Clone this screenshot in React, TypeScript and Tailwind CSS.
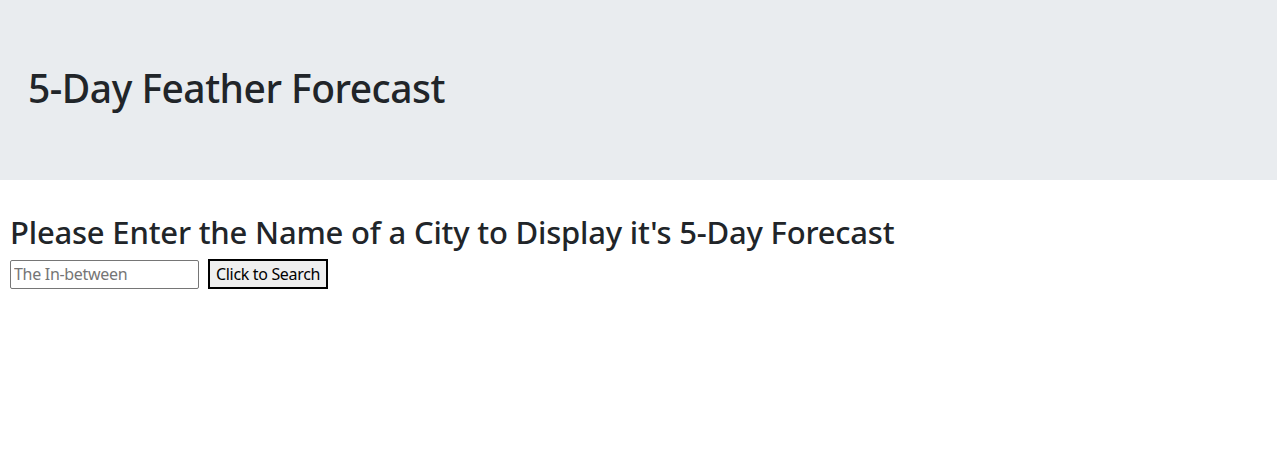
export default function App() {
  return (
    <div className="min-h-[464px] bg-white text-[#212529] font-['Noto_Sans',sans-serif]">
      <header className="h-[180px] bg-[#e9ecef] px-[28px] pt-[64px] mb-[33px]">
        <h1 className="text-[39px] leading-[48px] font-medium tracking-[-0.5px]">5-Day Feather Forecast</h1>
      </header>

      <main className="px-[10px]">
        <h2 className="text-[31px] leading-[38px] font-medium tracking-[-0.2px] mb-[8px]">
          Please Enter the Name of a City to Display it's 5-Day Forecast
        </h2>
        <form className="flex items-center gap-[9px]" onSubmit={(e) => e.preventDefault()}>
          <input
            type="text"
            placeholder="The In-between"
            className="w-[189px] h-[29px] border border-[#767676] rounded-[2px] px-[3px] text-[16px] tracking-[-0.3px] placeholder:text-[#757575] outline-none"
          />
          <button
            type="submit"
            className="h-[30px] px-[6px] border-2 border-black bg-[#efefef] text-[16px] tracking-[-0.33px] text-black"
          >
            Click to Search
          </button>
        </form>
      </main>
    </div>
  );
}
